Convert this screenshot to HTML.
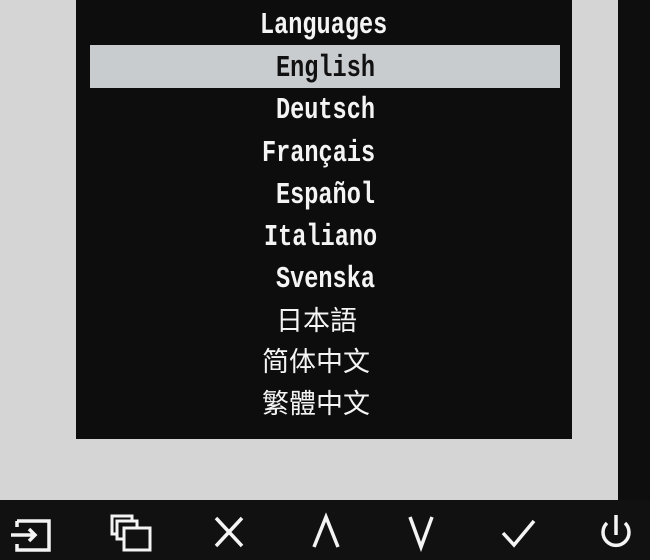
<!DOCTYPE html>
<html><head><meta charset="utf-8"><style>
body{margin:0;width:650px;height:560px;overflow:hidden;background:#d6d5d6;position:relative;font-family:"Liberation Mono","Noto Sans CJK SC",monospace}
.menu{position:absolute;left:76px;top:0;width:496px;height:439px;background:#0d0d0d}
.hl{position:absolute;left:90px;top:45px;width:470px;height:43px;background:#c9cccf}
.r{position:absolute;right:0;top:0;width:32px;height:500px;background:#0e0e0e}
.bar{position:absolute;left:0;top:500px;width:650px;height:60px;background:#111}
.t{position:absolute;color:#f4f4f4;font-size:31px;line-height:1;white-space:nowrap;transform:scaleX(0.76);transform-origin:0 0;font-weight:bold}
.c{position:absolute;color:#f4f4f4;font-size:27px;line-height:1;font-family:"Noto Sans CJK SC",sans-serif;letter-spacing:0px}
svg{position:absolute;top:0;left:0}
</style></head><body>
<div class="menu"></div>
<div class="hl"></div>
<div class="r"></div>
<div class="bar"></div>
<div class="t" style="left:260px;top:10px">Languages</div>
<div class="t" style="left:276px;top:53px;color:#111">English</div>
<div class="t" style="left:276px;top:95px">Deutsch</div>
<div class="t" style="left:262px;top:138px">Français</div>
<div class="t" style="left:276px;top:180px">Español</div>
<div class="t" style="left:264px;top:222px">Italiano</div>
<div class="t" style="left:276px;top:264px">Svenska</div>
<div class="c" style="left:276px;top:305px">日本語</div>
<div class="c" style="left:262px;top:346px">简体中文</div>
<div class="c" style="left:262px;top:388px">繁體中文</div>
<svg width="650" height="560" fill="none" stroke="#f4f4f4" stroke-width="3.5">
<path d="M17 521h32v29h-32v-6M17 527v-6M11 535h24M29 529l6 6-6 6"/>
<rect x="112" y="516" width="20" height="18" stroke-width="3"/>
<rect x="117" y="521" width="20" height="18" stroke-width="3" fill="#111"/>
<rect x="124" y="528" width="26" height="22" stroke-width="3" fill="#111"/>
<path d="M216 518l26 28M242 518l-26 28"/>
<path d="M314 547l12-30 12 30"/>
<path d="M410 517l11 30 11-30"/>
<path d="M503 533l11 12 20-24"/>
<path d="M616 515v20M607 523a13 13 0 1 0 18 0"/>
</svg>
</body></html>
